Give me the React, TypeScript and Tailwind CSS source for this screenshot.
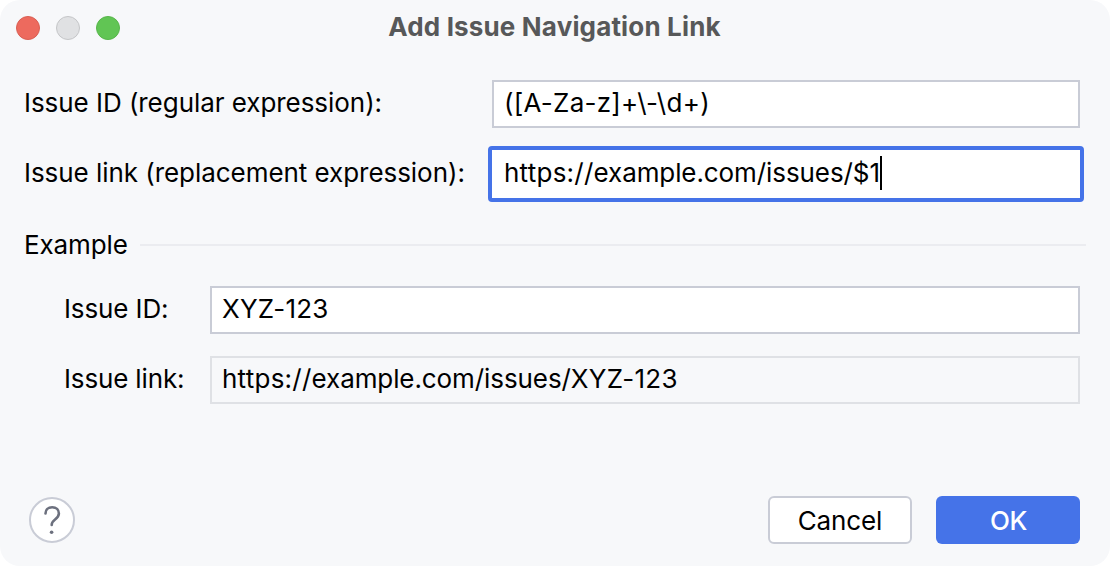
export default function App() {
  return (
    <div className="flex h-[566px] w-[1110px] flex-col rounded-[20px] bg-[#f7f8fa] font-['Inter',sans-serif] text-[26px] leading-[32px] text-black">
      <header className="grid h-[56px] grid-cols-[1fr_auto_1fr] items-center px-4">
        <div className="flex gap-4">
          <span className="size-6 rounded-full border border-[#d95f53] bg-[#ed6a5e]" />
          <span className="size-6 rounded-full border border-[#c5c6c8] bg-[#e0e1e3]" />
          <span className="size-6 rounded-full border border-[#57b64a] bg-[#61c554]" />
        </div>
        <h1 className="pb-0.5 pr-px text-[26px] font-bold tracking-[0.16px] text-[#575859]">Add Issue Navigation Link</h1>
      </header>
      <main className="flex flex-col tracking-[-0.05px]">
        <div className="mt-6 flex h-12 items-center pl-6">
          <label className="w-[468px] pb-0.5">Issue ID (regular expression):</label>
          <div className="flex h-12 w-[588px] items-center border-2 border-[#c9ccd6] bg-white pb-0.5 pl-[10px] tracking-[0.26px]">([A-Za-z]+\-\d+)</div>
        </div>
        <div className="mt-[18px] flex h-14 items-center pl-6">
          <label className="w-[464px] pb-0.5">Issue link (replacement expression):</label>
          <div className="flex h-14 w-[596px] items-center rounded-[4px] border-4 border-[#4573e8] bg-white pl-3">
            <span className="pb-0.5 tracking-[-0.09px]"><span className="tracking-[0.24px]">https://</span>example.com/issues/$1</span><span className="mb-0.5 h-[34px] w-[2px] bg-black" />
          </div>
        </div>
        <div className="mt-[27px] flex h-8 items-center gap-3 pl-6 pr-6">
          <span className="w-[104px] tracking-[-0.12px]">Example</span><span className="h-[2px] flex-1 bg-[#ebecf0]" />
        </div>
        <div className="mt-[25px] flex h-12 items-center pl-16">
          <label className="w-[146px] pb-0.5 tracking-[-0.12px]">Issue ID:</label>
          <div className="flex h-12 w-[870px] items-center border-2 border-[#c9ccd6] bg-white pb-0.5 pl-[10px] tracking-[0.2px]">XYZ-123</div>
        </div>
        <div className="mt-[22px] flex h-12 items-center pl-16">
          <label className="w-[146px] pb-0.5 tracking-[-0.15px]">Issue link:</label>
          <div className="flex h-12 w-[870px] items-center border-2 border-[#dfe1e5] pb-0.5 pl-[10px]">
            <span className="tracking-[-0.09px]"><span className="tracking-[0.24px]">https://</span>example.com/issues/<span className="tracking-[0.25px]">XYZ-123</span></span>
          </div>
        </div>
      </main>
      <footer className="mt-[92px] flex h-12 items-center pl-[29px] pr-[30px]">
        <button aria-label="Help" className="flex size-[46px] items-center justify-center rounded-full border-2 border-[#c9ccd6] bg-white">
          <svg width="42" height="42" viewBox="0 0 42 42" fill="none" className="shrink-0">
            <path d="M14.5 14.5C14.5 10.6 17.2 8.2 21.2 8.2C25.1 8.2 27.9 10.7 27.9 14.6C27.9 17.7 25.8 19.3 23.8 20.8C21.8 22.3 20.7 23.4 20.7 26" stroke="#6c707e" strokeWidth="2.6" strokeLinecap="round" />
            <circle cx="20.6" cy="33.2" r="1.8" fill="#6c707e" />
          </svg>
        </button>
        <button className="ml-auto h-12 w-[144px] rounded-[6px] border-2 border-[#c9ccd6] bg-white pt-0.5 tracking-[-0.1px]">Cancel</button>
        <button className="ml-6 h-12 w-[144px] rounded-[6px] bg-[#4573e8] pl-px pt-0.5 font-medium tracking-[-0.3px] text-white">OK</button>
      </footer>
    </div>
  );
}
